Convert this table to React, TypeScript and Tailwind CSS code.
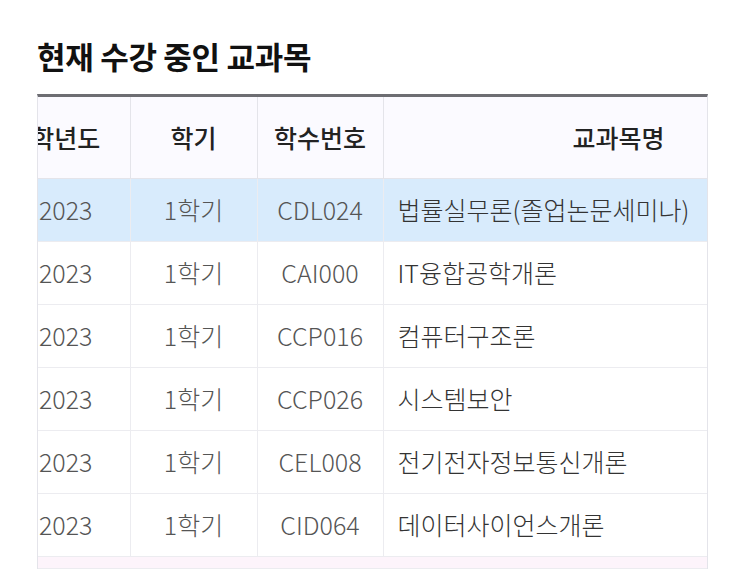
import React from "react";

const rows = [
  { year: "2023", term: "1학기", code: "CDL024", name: "법률실무론(졸업논문세미나)", selected: true },
  { year: "2023", term: "1학기", code: "CAI000", name: "IT융합공학개론" },
  { year: "2023", term: "1학기", code: "CCP016", name: "컴퓨터구조론" },
  { year: "2023", term: "1학기", code: "CCP026", name: "시스템보안" },
  { year: "2023", term: "1학기", code: "CEL008", name: "전기전자정보통신개론" },
  { year: "2023", term: "1학기", code: "CID064", name: "데이터사이언스개론" },
];

export default function App() {
  return (
    <div
      className="w-[743px] h-[579px] bg-white overflow-hidden pt-[36px]"
      style={{ fontFamily: '"Noto Sans CJK KR", "Noto Sans", sans-serif' }}
    >
      <h1 className="ml-[37px] text-[31px] leading-[40px] font-bold text-[#111] tracking-[-0.3px]">
        현재 수강 중인 교과목
      </h1>

      {/* table is scrolled sideways a little, so the first column is cut off */}
      <div className="ml-[37px] mt-[18px] w-[671px] overflow-hidden border-t-[3px] border-t-[#6d6d72] border-l border-r border-[#e4e4ea]">
        <table className="-ml-[36px] border-collapse table-fixed w-[707px]">
          <colgroup>
            <col className="w-[128px]" />
            <col className="w-[127px]" />
            <col className="w-[126px]" />
            <col />
          </colgroup>
          <thead>
            <tr className="h-[81px] bg-[#fbfaff] text-[#222] text-[25px]">
              <th className="border-r border-b border-[#e4e4ea] text-center font-medium">학년도</th>
              <th className="border-r border-b border-[#e4e4ea] text-center font-medium">학기</th>
              <th className="border-r border-b border-[#e4e4ea] text-center font-medium">학수번호</th>
              <th className="border-b border-[#e4e4ea] text-left pl-[189px] font-medium">교과목명</th>
            </tr>
          </thead>
          <tbody>
            {rows.map((r) => (
              <tr
                key={r.code}
                className={`h-[63px] text-[25px] font-light ${r.selected ? "bg-[#d8ebfc]" : "bg-white"}`}
              >
                <td className="border-r border-b border-[#ececf0] text-center text-[#555]">{r.year}</td>
                <td className="border-r border-b border-[#ececf0] text-center text-[#555]">{r.term}</td>
                <td className="border-r border-b border-[#ececf0] text-center text-[#555]">{r.code}</td>
                <td className="border-b border-[#ececf0] text-left pl-[14px] text-[#333] whitespace-nowrap">{r.name}</td>
              </tr>
            ))}
            <tr className="h-[12px] bg-[#fdf4fb]">
              <td colSpan={4} className="border-b border-[#ececf0]"></td>
            </tr>
          </tbody>
        </table>
      </div>
    </div>
  );
}
